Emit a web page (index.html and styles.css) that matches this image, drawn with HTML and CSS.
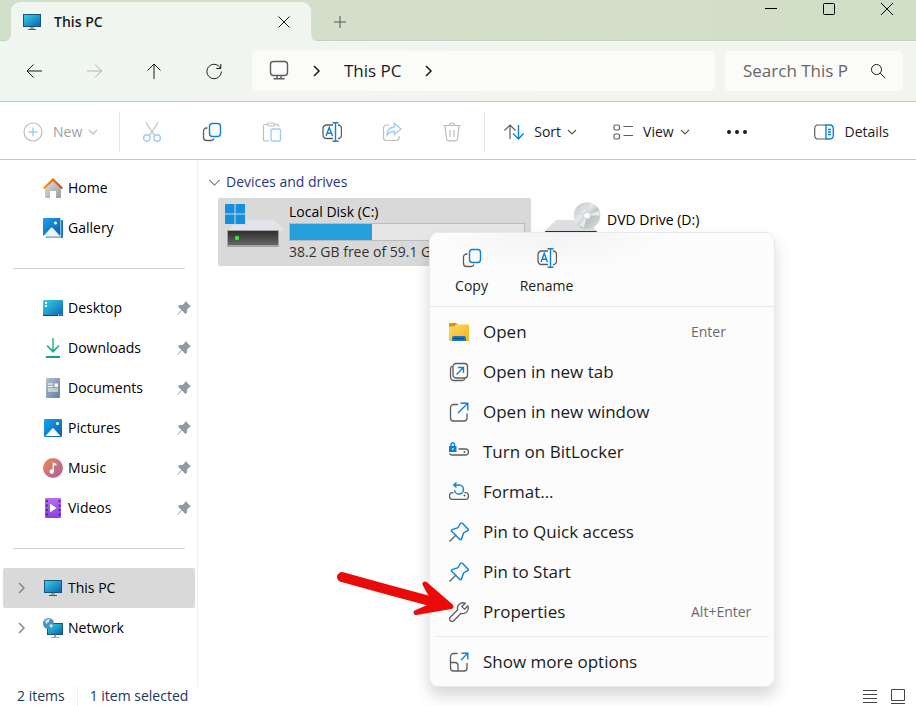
FILE: index.html
```
<!DOCTYPE html>
<html lang="en">
<head>
    <meta charset="UTF-8">
    <meta name="viewport" content="width=device-width, initial-scale=1.0">
    <title>This PC</title>
    <link rel="stylesheet" href="styles.css">
</head>
<body>
    <!-- Shared icons -->
    <svg class="sprite" aria-hidden="true">
        <defs>
            <linearGradient id="screen" x1="0" y1="0" x2="1" y2="1">
                <stop offset="0" stop-color="#35d3e0" />
                <stop offset="1" stop-color="#0a63b8" />
            </linearGradient>
            <linearGradient id="blue" x1="0" y1="0" x2="1" y2="1">
                <stop offset="0" stop-color="#1aa0ea" />
                <stop offset="1" stop-color="#0860b4" />
            </linearGradient>
            <linearGradient id="grey" x1="0" y1="0" x2="1" y2="1">
                <stop offset="0" stop-color="#e0e0e0" />
                <stop offset="1" stop-color="#9c9c9c" />
            </linearGradient>
            <linearGradient id="roof" x1="0" y1="0" x2="1" y2="0">
                <stop offset="0" stop-color="#f59a1c" />
                <stop offset="1" stop-color="#d3440c" />
            </linearGradient>
            <linearGradient id="doc" x1="0" y1="0" x2="1" y2="1">
                <stop offset="0" stop-color="#b2c3d6" />
                <stop offset="1" stop-color="#637d9b" />
            </linearGradient>
            <linearGradient id="music" x1="0" y1="0" x2="1" y2="1">
                <stop offset="0" stop-color="#f08a4b" />
                <stop offset="1" stop-color="#a85da8" />
            </linearGradient>
            <linearGradient id="video" x1="0" y1="0" x2="0" y2="1">
                <stop offset="0" stop-color="#b46cf2" />
                <stop offset="1" stop-color="#8a41e0" />
            </linearGradient>
            <linearGradient id="folder" x1="0" y1="0" x2="1" y2="1">
                <stop offset="0" stop-color="#ffd765" />
                <stop offset="1" stop-color="#f5b41a" />
            </linearGradient>
            <linearGradient id="down" x1="0" y1="0" x2="0" y2="1">
                <stop offset="0" stop-color="#35c58c" />
                <stop offset="1" stop-color="#119f8c" />
            </linearGradient>
            <linearGradient id="front" x1="0" y1="0" x2="0" y2="1">
                <stop offset="0" stop-color="#2f2f2f" />
                <stop offset="1" stop-color="#666" />
            </linearGradient>
            <linearGradient id="disc" x1="0" y1="0" x2="1" y2="1">
                <stop offset="0" stop-color="#b9c0c0" />
                <stop offset="0.4" stop-color="#e4e9e9" />
                <stop offset="0.6" stop-color="#bcc2c2" />
                <stop offset="1" stop-color="#d8dede" />
            </linearGradient>
        </defs>
        <symbol id="i-pc" viewBox="0 0 20 20">
            <rect x="1" y="2" width="18" height="13" fill="#18547c" />
            <rect x="2" y="3" width="16" height="11" fill="url(#screen)" />
            <path d="M8 15h4v2H8z" fill="#8fa3ad" />
            <path d="M6 17h8v1H6z" fill="#555" />
        </symbol>
        <symbol id="i-copy" viewBox="0 0 20 20">
            <path d="M5.500 6H4.500a3 3 0 0 0-3 3v6.500a3 3 0 0 0 3 3H9a3 3 0 0 0 3-2" fill="none" stroke="currentColor" stroke-width="1.300" />
            <rect class="accent" x="7.500" y="1.500" width="11" height="13" rx="3" />
        </symbol>
        <symbol id="i-rename" viewBox="0 0 20 20">
            <path d="M11 3H4.500A3.500 3.500 0 0 0 1 6.500v6.500A3.500 3.500 0 0 0 4.500 16.500H11M16 3a3.500 3.500 0 0 1 3.500 3.500v6.500A3.500 3.500 0 0 1 16 16.500" fill="none" stroke="currentColor" stroke-width="1.300" />
            <path class="accent" d="M4 14L7.250 5.500 10.500 14M5.200 11.200h4.100" />
            <path class="accent" d="M13.500 0.700v18.600M10.500 0.700h6M10.500 19.300h6" />
        </symbol>
        <symbol id="i-push" viewBox="0 0 14 14">
            <path d="M8.500 0L14 5.500 12.500 6 10 8.500 10 11.500 8.500 13 5 9.500 1 13.500 0 14 0.500 13 4.500 9 1 5.500 2.500 4 5.500 4 8 1.500z" fill="#8e99a1" />
        </symbol>
        <symbol id="i-pin" viewBox="0 0 20 20">
            <path d="M7 13L0.500 19.500" stroke="currentColor" stroke-width="1.300" />
            <path class="accent" d="M11.500 1.500C12 0.700 12.800 0.700 13.400 1.300L19 6.900C19.600 7.500 19.500 8.200 18.800 8.600L14.500 11L12.500 17C12.200 17.900 11.500 18 10.900 17.400L2.700 9.200C2.100 8.600 2.200 7.900 3.100 7.600L9 5.600Z" />
        </symbol>
        <symbol id="i-picture" viewBox="0 0 20 20">
            <rect x="1" y="1" width="18" height="18" rx="1" fill="url(#blue)" />
            <circle cx="14.500" cy="5.500" r="1.500" fill="#fff" />
            <path d="M2.500 18L9.300 10.600Q10 10 10.700 10.600L17.500 18z" fill="#fff" />
        </symbol>
        <symbol id="i-chevron" viewBox="0 0 10 10">
            <path d="M1 3l4 4 4-4" fill="none" stroke="currentColor" />
        </symbol>
        <symbol id="i-next" viewBox="0 0 10 14">
            <path d="M2 2l5 5-5 5" fill="none" stroke="currentColor" stroke-width="1.500" />
        </symbol>
    </svg>

    <div class="window">
        <header class="titlebar">
            <div class="tab">
                <svg class="icon"><use href="#i-pc" /></svg>
                <span class="tab__title">This PC</span>
                <button class="tab__close" aria-label="Close tab">
                    <svg class="icon" viewBox="0 0 20 20"><path d="M4.500 4.500l11 11M15.500 4.500l-11 11" /></svg>
                </button>
            </div>
            <button class="titlebar__add" aria-label="New tab">
                <svg class="icon" viewBox="0 0 20 20"><path d="M10 4v12M4 10h12" /></svg>
            </button>
            <div class="caption">
                <button aria-label="Minimize"><svg class="icon" viewBox="0 0 20 20"><path d="M4 9.500h12" /></svg></button>
                <button aria-label="Maximize"><svg class="icon" viewBox="0 0 20 20"><rect x="4.500" y="4.500" width="11" height="11" rx="1" /></svg></button>
                <button aria-label="Close"><svg class="icon" viewBox="0 0 20 20"><path d="M4 4l12 12M16 4l-12 12" /></svg></button>
            </div>
        </header>

        <nav class="navbar">
            <button class="navbar__button" aria-label="Back"><svg class="icon" viewBox="0 0 20 20"><path d="M18 10H3M9.500 3.500L3 10l6.500 6.500" /></svg></button>
            <button class="navbar__button" aria-label="Forward" disabled><svg class="icon" viewBox="0 0 20 20"><path d="M3 10h15M11 3.500l6.500 6.500-6.500 6.500" /></svg></button>
            <button class="navbar__button" aria-label="Up"><svg class="icon" viewBox="0 0 20 20"><path d="M10 18V3M3.500 9.500L10 3l6.500 6.500" /></svg></button>
            <button class="navbar__button" aria-label="Refresh"><svg class="icon" viewBox="0 0 20 20"><path d="M16.500 7.200A7.200 7.200 0 1 0 17.300 10.500M16.800 3v4.500h-4.500" /></svg></button>
            <div class="address">
                <svg class="address__pc" viewBox="0 0 22 22"><rect x="2.500" y="1.500" width="17" height="14" rx="3" /><path d="M9 15.500v3M13 15.500v3M5.500 18.800h11" /></svg>
                <svg class="next"><use href="#i-next" /></svg>
                <span>This PC</span>
                <svg class="next"><use href="#i-next" /></svg>
            </div>
            <label class="search">
                <input type="text" placeholder="Search This P" aria-label="Search This PC">
                <svg class="icon" viewBox="0 0 20 20"><circle cx="8.500" cy="8.500" r="5" /><path d="M12.200 12.200l5 5" /></svg>
            </label>
        </nav>

        <div class="commands">
            <button class="command" disabled>
                <svg class="icon" viewBox="0 0 20 20"><circle cx="10" cy="10" r="9" /><path class="accent" d="M10 5.500v9M5.500 10h9" /></svg>
                New
                <svg class="chevron"><use href="#i-chevron" /></svg>
            </button>
            <div class="commands__group">
                <button aria-label="Cut" disabled>
                    <svg class="icon" viewBox="0 0 20 20"><path d="M4 0.500l8.500 13M16 0.500l-8.500 13" /><circle class="accent" cx="4.800" cy="16" r="3.200" /><circle class="accent" cx="15.200" cy="16" r="3.200" /></svg>
                </button>
                <button aria-label="Copy"><svg class="icon"><use href="#i-copy" /></svg></button>
                <button aria-label="Paste" disabled>
                    <svg class="icon" viewBox="0 0 20 20"><path d="M5.500 2.500H3A1.500 1.500 0 0 0 1.500 4v13.500A1.500 1.500 0 0 0 3 19h4M12.500 2.500H15a1.500 1.500 0 0 1 1.500 1.500v1" /><rect x="5.500" y="1" width="7" height="3" rx="1.500" /><rect class="accent" x="9" y="7" width="9.500" height="12" rx="1.500" /></svg>
                </button>
                <button aria-label="Rename"><svg class="icon"><use href="#i-rename" /></svg></button>
                <button aria-label="Share" disabled>
                    <svg class="icon" viewBox="0 0 20 20"><path d="M7.500 3H4.500a3 3 0 0 0-3 3v9.500a3 3 0 0 0 3 3h9.500a3 3 0 0 0 3-3V14" /><path class="accent" d="M12.500 1.500l6.500 5.500-6.500 5.500V9.500C9 9.300 7 10.500 5 13c0.300-4.500 3-7.800 7.500-8.300z" /></svg>
                </button>
                <button aria-label="Delete" disabled>
                    <svg class="icon" viewBox="0 0 20 20"><path d="M1 3.500h18M7.500 3.500a2.500 2.500 0 0 1 5 0M3 3.500l1.500 13.500a2 2 0 0 0 2 1.800h7a2 2 0 0 0 2-1.800L17 3.500M8 8v7M12 8v7" /></svg>
                </button>
            </div>
            <button class="command">
                <svg class="icon" viewBox="0 0 20 20"><path d="M6 17V3M0.500 8.500L6 3l5.500 5.500" /><path class="accent" d="M14.500 3v14M9 11.500l5.500 5.500 5-5.500" /></svg>
                Sort
                <svg class="chevron"><use href="#i-chevron" /></svg>
            </button>
            <button class="command">
                <svg class="icon" viewBox="0 0 20 20"><rect x="1" y="3" width="5.500" height="5" rx="1.500" /><rect x="1" y="12" width="5.500" height="5" rx="1.500" /><path d="M10.500 4.500h9.500M10.500 13.500h9.500" /></svg>
                View
                <svg class="chevron"><use href="#i-chevron" /></svg>
            </button>
            <button class="command" aria-label="See more">
                <svg class="dots" viewBox="0 0 22 20"><circle cx="3" cy="10" r="2" /><circle cx="11" cy="10" r="2" /><circle cx="19" cy="10" r="2" /></svg>
            </button>
            <button class="command command--details">
                <svg class="icon" viewBox="0 0 20 20"><path d="M12 3H4A3.500 3.500 0 0 0 0.700 6.500v7A3.500 3.500 0 0 0 4 17h8" /><path class="accent" d="M12 3h4a3.500 3.500 0 0 1 3.300 3.500v7A3.500 3.500 0 0 1 16 17h-4zM14 7.500h3M14 10h3M14 12.500h3" /></svg>
                Details
            </button>
        </div>

        <div class="body">
            <nav class="sidebar" aria-label="Folders">
                <a class="place" href="#">
                    <svg class="icon" viewBox="0 0 20 20"><path d="M2 9l8-7 8 7v10a1 1 0 0 1-1 1h-4v-7H7v7H3a1 1 0 0 1-1-1z" fill="url(#grey)" /><path d="M0.700 10.500L10 1.500l9.300 9" fill="none" stroke="url(#roof)" stroke-width="2.200" /></svg>
                    <span>Home</span>
                </a>
                <a class="place" href="#">
                    <svg class="icon" viewBox="0 0 20 20"><path d="M4 2h15a1 1 0 0 1 1 1v15.500a1.500 1.500 0 0 1-1.500 1.500H3z" fill="#1168b8" /><path d="M3 18.500h15v1.500H4z" fill="#86b6e4" /><rect x="0" y="0" width="18.200" height="18.500" fill="#fff" /><rect width="17.500" height="18" rx="1" fill="url(#blue)" /><circle cx="12.500" cy="5" r="1.500" fill="#fff" /><path d="M0.500 18L8 9.800q0.800-0.700 1.600 0L17 18z" fill="#edf5fc" /></svg>
                    <span>Gallery</span>
                </a>
                <hr>
                <a class="place" href="#">
                    <svg class="icon" viewBox="0 0 20 20"><rect x="0" y="2" width="20" height="16" rx="1" fill="url(#screen)" /><path d="M0 17h20v1H0z" fill="#0b4b80" /><path d="M2 4h2v2H2zM2 7h2v2H2zM15 16.500h1v1h-1zM17.500 16.500h1v1h-1z" fill="#fff" /></svg>
                    <span>Desktop</span>
                    <svg class="push"><use href="#i-push" /></svg>
                </a>
                <a class="place" href="#">
                    <svg class="icon" viewBox="0 0 20 20"><path d="M9.300 0h1.500v11.500l4.700-4.500 1 1.300L10 15 3.600 8.300l1-1.300 4.700 4.500zM3 18h14v2H3z" fill="url(#down)" /></svg>
                    <span>Downloads</span>
                    <svg class="push"><use href="#i-push" /></svg>
                </a>
                <a class="place" href="#">
                    <svg class="icon" viewBox="0 0 20 20"><rect x="3" y="0" width="14" height="20" rx="1" fill="url(#doc)" /><path d="M5 6h5M5 8.500h5M5 11h10M5 13h10" stroke="#fff" stroke-width="1.200" /><path d="M11.500 5.500H15V9h-3.500z" fill="#fff" /></svg>
                    <span>Documents</span>
                    <svg class="push"><use href="#i-push" /></svg>
                </a>
                <a class="place" href="#">
                    <svg class="icon"><use href="#i-picture" /></svg>
                    <span>Pictures</span>
                    <svg class="push"><use href="#i-push" /></svg>
                </a>
                <a class="place" href="#">
                    <svg class="icon" viewBox="0 0 20 20"><circle cx="10" cy="10" r="10" fill="url(#music)" /><circle cx="8.800" cy="13.500" r="2.200" fill="#fff" /><path d="M9.600 13.500V4.500l3.900 1.200v2L11 7v6.500z" fill="#fff" /></svg>
                    <span>Music</span>
                    <svg class="push"><use href="#i-push" /></svg>
                </a>
                <a class="place" href="#">
                    <svg class="icon" viewBox="0 0 20 20"><rect x="2" y="0" width="16" height="20" rx="1" fill="url(#video)" /><path d="M4 2v17M16.500 2v17" stroke="#3b1d78" stroke-width="1.500" stroke-dasharray="2 2.500" /><path d="M7 5.500l6.500 4.500L7 14.500z" fill="#fff" /></svg>
                    <span>Videos</span>
                    <svg class="push"><use href="#i-push" /></svg>
                </a>
                <hr>
                <a class="place place--open active" href="#">
                    <svg class="next"><use href="#i-next" /></svg>
                    <svg class="icon"><use href="#i-pc" /></svg>
                    <span>This PC</span>
                </a>
                <a class="place place--open" href="#">
                    <svg class="next"><use href="#i-next" /></svg>
                    <svg class="icon" viewBox="0 0 20 20"><rect x="4" y="5" width="16" height="12" fill="#18547c" /><rect x="5" y="6" width="14" height="10" fill="url(#screen)" /><path d="M11 17h2v2h-2zM8 19h8v1H8z" fill="#98a5ad" /><circle cx="5.500" cy="5.500" r="5.500" fill="#4c91b5" /><path d="M2 3q3-3 5-2l-1 3-3 2zM6 7l3-1 1 2-2 2z" fill="#c3e0ec" /></svg>
                    <span>Network</span>
                </a>
            </nav>

            <main class="content">
                <button class="group">
                    <svg class="group__chevron"><use href="#i-chevron" /></svg>
                    Devices and drives
                </button>
                <div class="drives">
                    <div class="drive active">
                        <svg class="drive__icon" viewBox="0 0 60 56">
                            <path d="M14 18h36l12 11H4z" fill="#e2e4e9" />
                            <rect x="3" y="28" width="52" height="17" rx="1" fill="#a4a4a4" />
                            <rect x="4" y="29" width="50" height="14" fill="url(#front)" />
                            <circle cx="13" cy="36" r="2.200" fill="#2bf02b" />
                            <rect x="0" y="1" width="22" height="22" fill="#d9d9d9" />
                            <path d="M1 2h9.500v9.500H1zM11.500 2H21v9.500h-9.500zM1 12.500h9.500V22H1zM11.500 12.500H21V22h-9.500z" fill="#1490df" />
                        </svg>
                        <div class="drive__info">
                            <div class="drive__name">Local Disk (C:)</div>
                            <div class="usage"><div class="usage__fill" style="width: 35%"></div></div>
                            <div class="drive__free">38.2 GB free of 59.1 GB</div>
                        </div>
                    </div>
                    <div class="drive drive--dvd">
                        <svg class="drive__icon" viewBox="0 0 60 56">
                            <path d="M14 18h30l11 11H3z" fill="#dddfe3" />
                            <rect x="3" y="29" width="52" height="17" rx="1" fill="url(#front)" />
                            <circle cx="45" cy="13.500" r="13.300" fill="url(#disc)" />
                            <path d="M45 13.500L33 8l-1 4zM45 13.500l-2-13 5 0z" fill="#e7cfe4" opacity="0.700" />
                            <path d="M45 13.500l12-5 1 5zM45 13.500l-8 10 5 2z" fill="#f0f4f3" opacity="0.800" />
                            <circle cx="45" cy="13.500" r="3.500" fill="#fff" stroke="#c9cfcf" />
                        </svg>
                        <div class="drive__name">DVD Drive (D:)</div>
                    </div>
                </div>

                <div class="menu">
                    <div class="menu__top">
                        <button><svg class="icon"><use href="#i-copy" /></svg>Copy</button>
                        <button><svg class="icon"><use href="#i-rename" /></svg>Rename</button>
                    </div>
                    <div class="menu__list">
                        <button class="menu__item">
                            <svg class="icon folder" viewBox="0 0 20 20"><path d="M0 2a1 1 0 0 1 1-1h6l2 2h-2L5 5H0z" fill="#d59a0a" /><path d="M0 4.500h6.500L9 2.500h11V19H0z" fill="url(#folder)" /><path d="M3 19v-3a2 2 0 0 1 2-2h10a2 2 0 0 1 2 2v3z" fill="#0f7bd0" /><path d="M5 16.500h10" stroke="#0b4c88" /></svg>
                            Open
                            <kbd>Enter</kbd>
                        </button>
                        <button class="menu__item">
                            <svg class="icon" viewBox="0 0 20 20"><rect x="4" y="1.500" width="14.500" height="14.500" rx="3" /><path d="M3.500 4A3 3 0 0 0 1.500 7v8a3.500 3.500 0 0 0 3.500 3.500h8a3 3 0 0 0 3-2" /><path class="accent" d="M7.500 12.500l7-7M9 5.500h5.500V11" /></svg>
                            Open in new tab
                        </button>
                        <button class="menu__item">
                            <svg class="icon" viewBox="0 0 20 20"><path d="M9 2.500H4.500a3 3 0 0 0-3 3V16a3 3 0 0 0 3 3H15a3 3 0 0 0 3-3v-4.500" /><path class="accent" d="M9 11l9.500-9.500M11.500 1.200h7.300v7.300" /></svg>
                            Open in new window
                        </button>
                        <button class="menu__item">
                            <svg class="icon" viewBox="0 0 20 20"><path d="M9.500 7h7a3 3 0 0 1 0 6H3a3 3 0 0 1-2.500-1.500" /><circle class="spot" cx="15.500" cy="10" r="1" /><path class="accent" d="M2 4.500V2.500a1.700 1.700 0 0 1 3.500 0v2" /><path d="M0 4h7.500v6H0zM3 6.200v1.600h1.500V6.200z" class="lock" /></svg>
                            Turn on BitLocker
                        </button>
                        <button class="menu__item">
                            <svg class="icon" viewBox="0 0 20 20"><path d="M4.500 10.700H3a2.500 2.500 0 0 0-2.400 2.500v1.600a2.500 2.500 0 0 0 2.400 2.500h14a2.500 2.500 0 0 0 2.400-2.500v-1.600a2.500 2.500 0 0 0-2.400-2.500h-1.500" /><circle class="spot" cx="15.500" cy="13.500" r="1" /><path class="accent" d="M5 3h5a4.500 4.500 0 1 1-4.500 5M7.500 0.500L4.800 3l2.700 2.500" /></svg>
                            Format...
                        </button>
                        <button class="menu__item">
                            <svg class="icon"><use href="#i-pin" /></svg>
                            Pin to Quick access
                        </button>
                        <button class="menu__item">
                            <svg class="icon"><use href="#i-pin" /></svg>
                            Pin to Start
                        </button>
                        <button class="menu__item">
                            <svg class="icon" viewBox="0 0 20 20"><path d="M16.300 1.300A5.500 5.500 0 0 0 8.700 7.800L1.300 15.200A2.400 2.400 0 0 0 4.800 18.700L12 11.300A5.500 5.500 0 0 0 18.800 4L15.500 7.200 12.800 4.600z" /></svg>
                            Properties
                            <kbd>Alt+Enter</kbd>
                        </button>
                    </div>
                    <div class="menu__more">
                        <button class="menu__item">
                            <svg class="icon" viewBox="0 0 20 20"><path d="M8.500 1.500h-4a3 3 0 0 0-3 3V16a3 3 0 0 0 3 3H15a3 3 0 0 0 3-3v-5M1.500 10.500H6a3 3 0 0 1 3 3V19" /><path class="accent" d="M12 8l6.500-6.500M12.500 1.200h6.300v6.300" /></svg>
                            Show more options
                        </button>
                    </div>
                </div>

                <svg class="arrow" viewBox="0 0 124 52" aria-hidden="true">
                    <path d="M8 7q50 14 88 24" />
                    <path class="arrow__head" d="M91 14l26 22.500-35 6L102 34z" />
                </svg>
            </main>
        </div>

        <footer class="status">
            <span>2 items</span>
            <span>1 item selected</span>
            <button class="status__view" aria-label="Details view"><svg class="icon" viewBox="0 0 20 20"><path d="M3 4.500h14M3 8.500h14M3 12.500h14M3 16.500h14" /></svg></button>
            <button aria-label="Large icons view"><svg class="icon" viewBox="0 0 20 20"><path d="M3.500 3.500h13v11h-13zM3 17.500h14" /></svg></button>
        </footer>
    </div>
</body>
</html>
```

FILE: styles.css
```
* {
	box-sizing: border-box;
	margin: 0;
	padding: 0;
}

:root {
	--fg: #1b1b1b;
	--line: #5c5c5c;
	--accent: #0f7fd8;
	--edge: #bccab8;
	--selected: #d9d9d9;
	--bar: #f1f5ef;
}

body {
	font-family: "Open Sans", "Noto Sans", sans-serif;
	font-size: 14px;
	line-height: 20px;
	color: var(--fg);
	background-color: #fff;
}

button {
	appearance: none;
	border: 0;
	background: none;
	font: inherit;
	color: inherit;
	white-space: nowrap;
}

a {
	color: inherit;
	text-decoration: none;
}

svg {
	display: block;
	flex-shrink: 0;
	fill: none;
	stroke: currentColor;
}

symbol,
use,
.place .icon,
.push,
.folder,
.drive__icon {
	stroke: none;
}

.sprite {
	position: absolute;
	width: 0;
	height: 0;
}

.icon {
	width: 20px;
	height: 20px;
}

.accent {
	fill: none;
	stroke: var(--accent);
	stroke-width: 1.4;
}

.next {
	width: 10px;
	height: 14px;
}

.window {
	display: flex;
	flex-direction: column;
	min-height: 100vh;
}

/* Title bar */
.titlebar {
	display: flex;
	height: 41px;
	padding: 2px 0 0 11px;
	background: linear-gradient(90deg, #d0e0cb, #d5dfca 60%, #d0dec5);
	box-shadow: inset 0 -1px #c3d3bf;
}

.tab {
	position: relative;
	display: flex;
	align-items: center;
	width: 300px;
	padding: 0 17px 0 11px;
	background-color: var(--bar);
	border-radius: 9px 9px 0 0;

	&::before,
	&::after {
		content: '';
		position: absolute;
		bottom: 0;
		width: 5px;
		height: 5px;
	}

	&::before {
		right: 100%;
		background: radial-gradient(circle at 0 0, transparent 4px, var(--bar) 5px);
	}

	&::after {
		left: 100%;
		background: radial-gradient(circle at 100% 0, transparent 4px, var(--bar) 5px);
	}
}

.tab__title {
	margin-left: 12px;
	font-weight: 600;
}

.tab__close {
	margin-left: auto;
}

.titlebar__add {
	width: 58px;
	display: grid;
	place-items: center;
	color: #555;
}

.caption {
	display: flex;
	align-items: flex-start;
	margin-left: auto;
	color: #000;

	button {
		display: grid;
		justify-items: center;
		width: 58px;
		height: 20px;
		align-items: center;
		margin-top: -3px;
	}
}

/* Navigation */
.navbar {
	display: flex;
	align-items: center;
	height: 61px;
	padding: 0 13px 0 4px;
	background: linear-gradient(90deg, #f0f6f1, #f2f5ed);
	border-bottom: 1px solid var(--edge);
}

.navbar__button {
	display: grid;
	place-items: center;
	width: 60px;
	height: 40px;

	&:disabled {
		color: #b0b4ae;
	}
}

.address,
.search {
	display: flex;
	align-items: center;
	height: 40px;
	background-color: #fbfcfa;
	border-radius: 5px;
	font-size: 17px;
}

.address {
	flex: 1;
	gap: 22px;
	margin-left: 8px;
	padding-left: 16px;
}

.address__pc {
	width: 22px;
	height: 22px;
	color: var(--line);
	stroke-width: 1.4;
}

.search {
	width: 178px;
	margin-left: 10px;
	padding: 0 15px 0 18px;

	input {
		flex: 1;
		min-width: 0;
		border: 0;
		outline: none;
		background: none;
		font: inherit;

		&::placeholder {
			color: #666;
			opacity: 1;
		}
	}
}

/* Command bar */
.commands {
	display: flex;
	align-items: center;
	height: 58px;
	padding: 2px 17px 0 13px;
	border-bottom: 1px solid var(--edge);

	.icon,
	.chevron {
		color: var(--line);
		stroke-width: 1.2;
	}

	button:disabled {
		color: #a0a0a0;

		.icon,
		.chevron {
			--accent: #9fccf3;
			color: #bdbdbd;
		}
	}
}

.command {
	display: flex;
	align-items: center;
	gap: 10px;
	padding: 0 10px;
}

.chevron {
	width: 10px;
	height: 10px;
	margin-left: -4px;
}

.commands__group {
	display: flex;
	margin: 0 9px 0 11px;
	padding: 0 2px;
	border: solid #e8e8e8;
	border-width: 0 1px;

	button {
		display: grid;
		place-items: center;
		width: 60px;
		height: 40px;
	}
}

.command + .command {
	margin-left: 16px;
}

.dots {
	width: 22px;
	height: 20px;
	fill: currentColor;
	stroke: none;
}

.command.command--details {
	margin-left: auto;
}

/* Body */
.body {
	flex: 1;
	display: flex;
}

.sidebar {
	width: 198px;
	flex-shrink: 0;
	padding: 8px 2px 0 3px;
	border-right: 1px solid #f0f0f0;

	hr {
		height: 1px;
		border: 0;
		background-color: #d2d2d2;
		margin: 20px 10px 19px;
	}
}

.place {
	display: flex;
	align-items: center;
	height: 40px;
	padding: 0 4px 0 40px;
	color: #000;

	span {
		margin-left: 5px;
	}

	&.active {
		background-color: var(--selected);
		border-radius: 2px;
	}
}

.place--open {
	padding-left: 14px;

	.next {
		margin-right: 16px;
		color: #888;
	}
}

.push {
	width: 14px;
	height: 14px;
	margin-left: auto;
}

.content {
	position: relative;
	flex: 1;
	min-width: 0;
	padding: 12px 0 0 10px;
}

.group {
	display: flex;
	align-items: center;
	gap: 5px;
	color: #1f3687;
}

.group__chevron {
	width: 13px;
	height: 13px;
	color: #888;
}

.drives {
	display: flex;
	gap: 5px;
	padding: 6px 0 0 10px;
}

.drive {
	display: flex;
	gap: 5px;
	width: 313px;
	height: 68px;
	padding: 4px 6px;
	color: #000;

	&.active {
		background-color: var(--selected);
		border-radius: 2px;
	}
}

.drive--dvd .drive__name {
	padding-top: 8px;
}

.drive__icon {
	width: 60px;
	height: 56px;
}

.drive__info {
	flex: 1;
	white-space: nowrap;
}

.usage {
	height: 18px;
	margin: 1px 0;
	border: 1px solid #bbb;
	background-color: #e6e6e6;
}

.usage__fill {
	height: 100%;
	background-color: #26a0da;
}

.drive__free {
	color: #333;
}

/* Context menu */
.menu {
	position: absolute;
	top: 72px;
	left: 231px;
	width: 346px;
	background-color: #fcfcfc;
	border: 1px solid #e9e9e9;
	border-radius: 9px;
	box-shadow: 0 9px 16px rgba(0, 0, 0, 0.16);

	.icon {
		color: var(--line);
		stroke-width: 1.3;
	}
}

.menu__top {
	display: flex;
	height: 74px;
	padding: 15px 0 0 4px;
	border-bottom: 1px solid #e8e8e8;
	border-radius: 9px 9px 0 0;
	background: radial-gradient(ellipse at 36% 0, #f3f3f3, #fcfcfc 38%);

	button {
		display: flex;
		flex-direction: column;
		align-items: center;
		gap: 8px;
		width: 75px;
		height: 48px;
	}
}

.menu__list {
	padding: 5px 0 4px;
}

.menu__more {
	margin: 0 5px;
	padding: 5px 0 4px;
	border-top: 1px solid #e8e8e8;

	.menu__item {
		padding-left: 14px;
	}
}

.menu__item {
	display: flex;
	align-items: center;
	gap: 14px;
	width: 100%;
	height: 40px;
	padding: 0 19px;
	font-size: 17px;

	kbd {
		width: 64px;
		margin-left: auto;
		font-family: inherit;
		font-size: 14px;
		text-align: left;
		color: #6b6b6b;
	}
}

.lock {
	fill: var(--accent);
	fill-rule: evenodd;
	stroke: none;
}

.spot {
	fill: currentColor;
	stroke: none;
}

/* Pointer to the Properties entry */
.arrow {
	position: absolute;
	top: 410px;
	left: 136px;
	width: 124px;
	height: 52px;
	color: #ea0a0a;
	stroke-width: 10;
	stroke-linecap: round;
	stroke-linejoin: round;
	pointer-events: none;
}

.arrow__head {
	fill: currentColor;
	stroke-width: 5;
}

/* Status bar */
.status {
	display: flex;
	align-items: center;
	height: 20px;
	padding: 0 8px 0 17px;
	color: #24355e;

	span + span {
		margin-left: 12px;
		padding-left: 12px;
		border-left: 1px solid #eee;
	}

	button {
		margin-left: 8px;
		color: #444;
	}

	.status__view {
		margin-left: auto;
	}
}
```
